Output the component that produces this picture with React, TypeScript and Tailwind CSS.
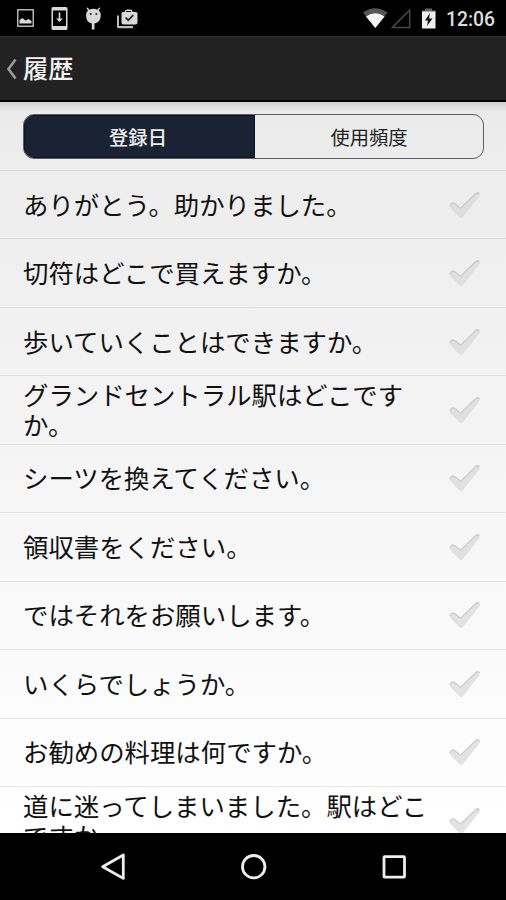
const phrases = [
  'ありがとう。助かりました。',
  '切符はどこで買えますか。',
  '歩いていくことはできますか。',
  'グランドセントラル駅はどこですか。',
  'シーツを換えてください。',
  '領収書をください。',
  'ではそれをお願いします。',
  'いくらでしょうか。',
  'お勧めの料理は何ですか。',
  '道に迷ってしまいました。駅はどこですか。',
];

function StatusBar() {
  return (
    <div className="h-9 w-full shrink-0 bg-black">
      <svg width="506" height="36" viewBox="0 0 506 36">
        <g fill="#d8d8d8">
          <path fillRule="evenodd" d="M17 9h17v18H17zM18.500 10.500v15h14v-15z" fill="#b4b4b4" />
          <path d="M19.500 23.500v-3.500l3-2 3 2.500 3-1.500 3 2v2.500z" />
          <path fillRule="evenodd" d="M53 7h13q1.500 0 1.500 1.500v20q0 1.500-1.500 1.500H53q-1.500 0-1.500-1.500v-20Q51.500 7 53 7zm0 3.500v15.500h13V10.500z" />
          <path d="M58.700 12.500h1.600v6h2.600l-3.400 3.500-3.400-3.500h2.600z" />
          <path d="M86 15q0-3 2-4.500L86.500 8l1-.5 2 2.200q3.800-1.700 7.800 0l2-2.200 1 .5-1.500 2.500q2 1.500 2 4.500 0 7.500-6.300 8.500v6h-2.700v-6Q86 22.500 86 15z" />
          <path d="M117 15.500h2V26h14v2.300h-14.500q-1.500 0-1.500-1.500z" fill="#bcbcbc" />
          <path fillRule="evenodd" d="M121.500 12h3q.5-2.500 2.500-2.500h3.500q2 0 2.300 2.500h3.200q1.500 0 1.500 1.500v9q0 2-2 2h-12q-2 0-2-2v-9q0-1.500 1.500-1.500zm4.500 0h5v-1h-5z" />
        </g>
        <g fill="#222">
          <circle cx="90.700" cy="14" r="1" />
          <circle cx="96.300" cy="14" r="1" />
        </g>
        <path d="m125.500 17.500 2.700 2.700 5-5" fill="none" stroke="#222" strokeWidth="1.700" />
        <path d="M363 12.500q12-8.500 24.500 0L375.300 28z" fill="#555" />
        <path d="M366 16.500q9.300-6.500 18.600 0L375.300 28z" fill="#f4f4f4" />
        <path d="M392.500 27.400 409.700 10v17.400z" fill="none" stroke="#484848" strokeWidth="1.500" />
        <path d="M422 10.500h3V8.500h7v2h3.500V13H422z" fill="#666" />
        <path d="M422 11.500h13.500v17H422z" fill="#eee" />
        <path d="M430 13 425 20.500h3L427 26l5.500-7.500H429z" fill="#111" />
        <text x="446" y="26" textLength="49" lengthAdjust="spacingAndGlyphs" fill="#dedede" fontSize="20" fontWeight="500" fontFamily="Roboto, sans-serif">12:06</text>
      </svg>
    </div>
  );
}

function Check() {
  return (
    <svg className="mt-[2px] mr-6 shrink-0" width="34" height="30" viewBox="0 0 34 30">
      <path d="M2 14q2.500-4 6-.5l4.500 3.700L27.500 2.700q2.500-2 4 0 1 1.500-.5 3L15 26q-1.700 2-3.700.3L2.600 17.300Q1.200 16 2 14z" fill="#d8d8d8" fillOpacity=".72" />
      <path d="M2 15q1.500-5.500 6-1.500l4.500 3.700L27.500 2.700q2-1.800 4 0" fill="none" stroke="#c2c2c2" strokeOpacity=".75" strokeWidth="1.300" />
    </svg>
  );
}

function NavigationBar() {
  return (
    <nav className="h-[67px] shrink-0 bg-black">
      <svg width="506" height="67" viewBox="0 0 506 67" fill="none" stroke="#eeeeee" strokeWidth="2.800" strokeLinejoin="round">
        <path d="M102.700 33.700 123.300 22v23.400z" />
        <circle cx="253.700" cy="33.700" r="11.200" />
        <rect x="384" y="23.700" width="20.500" height="20.500" rx=".7" />
      </svg>
    </nav>
  );
}

export default function App() {
  return (
    <main className="flex h-[900px] w-[506px] flex-col overflow-hidden bg-black font-['Noto_Sans_CJK_JP',sans-serif]">
      <StatusBar />
      <header className="flex h-[66px] shrink-0 items-center border-t border-b-2 border-t-[#303030] border-b-black bg-[#222222]">
        <svg className="ml-[6px] shrink-0" width="12" height="24" viewBox="0 0 12 24" fill="none" stroke="#9a9a9a" strokeWidth="2.600">
          <path d="M9.500 2.500 2.500 12l7 9.500" />
        </svg>
        <h1 className="mb-[3px] ml-[5px] text-[25.200px] leading-[30px] font-medium text-[#f4f4f4]">履歴</h1>
      </header>
      <section className="flex min-h-0 flex-1 flex-col overflow-hidden bg-linear-to-b from-[#ebebeb] to-white">
        <div className="h-[68px] shrink-0 bg-linear-to-b from-[#d0d0d0] via-[#ebebeb] via-15% to-[#ededed] pt-[12px] pr-[22px] pl-[23px]">
          <div className="flex h-[45px] overflow-hidden rounded-[11px] border border-[#5b5e67] text-[19.300px] leading-[28px]">
            <button className="flex w-[231px] items-center justify-center bg-[#1b2234] pr-[3px] font-medium text-[#eeeeee] shadow-[inset_0_0_0_1px_#101422]">登録日</button>
            <button className="flex flex-1 items-center justify-center text-[#222222]">使用頻度</button>
          </div>
        </div>
        <ul className="shrink-0">
          {phrases.map((phrase) => (
            <li key={phrase} className="flex h-[68.450px] items-center border-t border-black/8 pl-[23px] text-[#111111]">
              <p className="mb-[2px] w-[410px] text-[25.400px] leading-[30px]">{phrase}</p>
              <span className="ml-auto"><Check /></span>
            </li>
          ))}
        </ul>
      </section>
      <NavigationBar />
    </main>
  );
}
